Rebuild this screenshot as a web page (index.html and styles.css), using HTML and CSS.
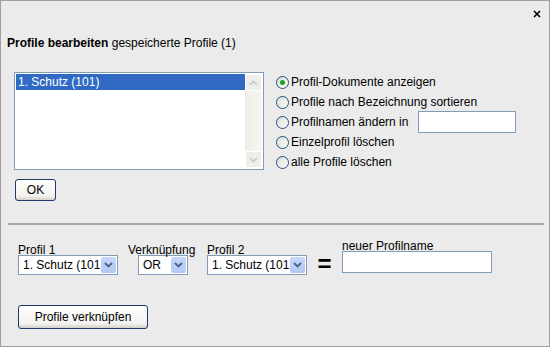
FILE: index.html
```html
<!DOCTYPE html>
<html lang="de">
<head>
	<meta charset="UTF-8">
	<title>Profile bearbeiten</title>
	<link rel="stylesheet" href="styles.css">
</head>
<body>
	<div class="dialog">
		<div class="close-row">
			<svg class="close" width="8" height="8" viewBox="0 0 8 8"><path d="M1 1 L7 7 M7 1 L1 7" stroke="#000" stroke-width="1.6"/></svg>
		</div>
		<div class="title"><b>Profile bearbeiten</b> gespeicherte Profile (1)</div>

		<div class="top">
			<div class="left">
				<div class="listbox">
					<div class="items">
						<div class="item selected">1. Schutz (101)</div>
					</div>
					<div class="scroll">
						<div class="sbtn"><svg width="9" height="6" viewBox="0 0 9 6"><path d="M1 5 L4.5 1.5 L8 5" fill="none" stroke="#c8c8c8" stroke-width="1.6"/></svg></div>
						<div class="sbtn"><svg width="9" height="6" viewBox="0 0 9 6"><path d="M1 1 L4.5 4.5 L8 1" fill="none" stroke="#c8c8c8" stroke-width="1.6"/></svg></div>
					</div>
				</div>
				<button class="btn ok">OK</button>
			</div>
			<div class="options">
				<label class="opt"><span class="radio checked"></span>Profil-Dokumente anzeigen</label>
				<label class="opt"><span class="radio"></span>Profile nach Bezeichnung sortieren</label>
				<label class="opt"><span class="radio"></span>Profilnamen ändern in <span class="field small"></span></label>
				<label class="opt"><span class="radio"></span>Einzelprofil löschen</label>
				<label class="opt"><span class="radio"></span>alle Profile löschen</label>
			</div>
		</div>

		<hr class="sep">

		<div class="combine">
			<div class="col c1">
				<div class="lbl">Profil 1</div>
				<div class="select w100"><span class="val">1. Schutz (101</span><span class="arrow"><svg width="9" height="6" viewBox="0 0 9 6"><path d="M1 1 L4.5 4.5 L8 1" fill="none" stroke="#4d6185" stroke-width="1.8"/></svg></span></div>
			</div>
			<div class="col c2">
				<div class="lbl">Verknüpfung</div>
				<div class="select w50"><span class="val">OR</span><span class="arrow"><svg width="9" height="6" viewBox="0 0 9 6"><path d="M1 1 L4.5 4.5 L8 1" fill="none" stroke="#4d6185" stroke-width="1.8"/></svg></span></div>
			</div>
			<div class="col c3">
				<div class="lbl">Profil 2</div>
				<div class="select w100"><span class="val">1. Schutz (101</span><span class="arrow"><svg width="9" height="6" viewBox="0 0 9 6"><path d="M1 1 L4.5 4.5 L8 1" fill="none" stroke="#4d6185" stroke-width="1.8"/></svg></span></div>
			</div>
			<div class="eq">=</div>
			<div class="col">
				<div class="lbl">neuer Profilname</div>
				<div class="field big"></div>
			</div>
		</div>

		<button class="btn link">Profile verknüpfen</button>
	</div>
</body>
</html>
```

FILE: styles.css
```css
*{
	margin: 0;
	padding: 0;
	box-sizing: border-box;
}
body{
	font-family: "Liberation Sans", "DejaVu Sans", sans-serif;
	font-size: 12px;
	color: #000;
	background: #fff;
}
.dialog{
	width: 550px;
	height: 347px;
	border: 1px solid #a0a0a0;
	background: #ebebeb;
	padding: 0 6px;
}
.close-row{
	height: 30px;
	display: flex;
	justify-content: flex-end;
	align-items: flex-start;
	padding-right: 2px;
	padding-top: 9px;
}
.close{
	display: block;
}
.title{
	height: 25px;
	line-height: 25px;
}
.top{
	display: flex;
	margin-top: 16px;
	padding-left: 7px;
}
.left{
	width: 263px;
}
.listbox{
	display: flex;
	width: 250px;
	height: 98px;
	border: 1px solid #7f9db9;
	background: #fff;
	padding: 1px;
}
.items{
	flex: 1;
}
.item{
	height: 16px;
	line-height: 16px;
	padding-left: 2px;
}
.selected{
	background: #316ac5;
	color: #fff;
}
.scroll{
	width: 17px;
	background: linear-gradient(to right, #eeede5, #f7f7f2);
	display: flex;
	flex-direction: column;
	justify-content: space-between;
}
.sbtn{
	height: 17px;
	border: 1px solid #fff;
	background: #efefe9;
	display: flex;
	align-items: center;
	justify-content: center;
}
.btn{
	font-family: "Liberation Sans", sans-serif;
	font-size: 12px;
	background: linear-gradient(#ffffff, #f2f2ee 80%, #d6d0c5);
	border: 1px solid #1c3b6b;
	border-radius: 3px;
	color: #000;
}
.ok{
	width: 41px;
	height: 22px;
	margin-top: 9px;
	margin-left: 1px;
}
.options{
	margin-left: -1px;
}
.opt{
	display: flex;
	align-items: center;
	height: 20px;
}
.radio{
	width: 13px;
	height: 13px;
	border: 1px solid #1c5180;
	border-radius: 50%;
	background: linear-gradient(135deg, #dcdcd7, #ffffff);
	margin-right: 2px;
	position: relative;
	flex: none;
}
.radio.checked::after{
	content: "";
	position: absolute;
	left: 3px;
	top: 3px;
	width: 5px;
	height: 5px;
	border-radius: 50%;
	background: #21a121;
}
.field{
	display: inline-block;
	border: 1px solid #7f9db9;
	background: #fff;
}
.field.small{
	width: 98px;
	height: 22px;
	margin-left: 10px;
}
.field.big{
	width: 150px;
	height: 22px;
}
.sep{
	border: none;
	border-top: 2px solid #a6a6a6;
	margin-top: 22px;
	margin-left: 1px;
	width: 536px;
}
.combine{
	display: flex;
	align-items: flex-end;
	margin-top: 17px;
	padding-left: 11px;
}
.lbl{
	height: 9px;
	line-height: 9px;
}
.c1{
	width: 110px;
}
.c2{
	width: 79px;
}
.c2 .select{
	margin-left: 10px;
}
.select{
	display: flex;
	height: 20px;
	border: 1px solid #7f9db9;
	background: #fff;
	padding: 1px;
	margin-bottom: 1px;
}
.w100{
	width: 100px;
}
.w50{
	width: 50px;
}
.val{
	flex: 1;
	padding-left: 3px;
	line-height: 16px;
	overflow: hidden;
	white-space: nowrap;
}
.arrow{
	width: 15px;
	background: linear-gradient(#c6d6fb, #b3c8f5);
	border-radius: 2px;
	display: flex;
	align-items: center;
	justify-content: center;
}
.eq{
	font-size: 24px;
	font-weight: bold;
	width: 35px;
	text-align: center;
	line-height: 22px;
	margin-bottom: 1px;
}
.link{
	display: block;
	width: 130px;
	height: 24px;
	margin-top: 29px;
	margin-left: 11px;
}
```
